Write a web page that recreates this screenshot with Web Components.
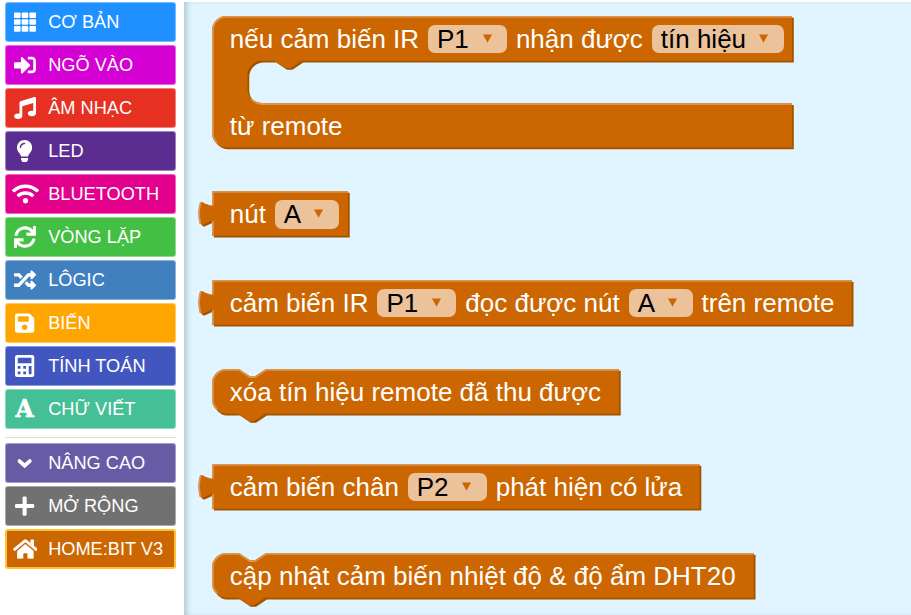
<!DOCTYPE html>
<html lang="vi">
<head>
<meta charset="utf-8">
<title>Home:Bit V3</title>
<style>
html, body { margin: 0; height: 100%; background: #fff; overflow: hidden; }
body { font-family: "Liberation Sans", Arial, sans-serif; }
</style>
</head>
<body>
<editor-app></editor-app>
<script>
const ICONS = {
  grid: [512, '<rect x="0" y="32" width="153" height="130" rx="22"/><rect x="179" y="32" width="153" height="130" rx="22"/><rect x="359" y="32" width="153" height="130" rx="22"/><rect x="0" y="191" width="153" height="130" rx="22"/><rect x="179" y="191" width="153" height="130" rx="22"/><rect x="359" y="191" width="153" height="130" rx="22"/><rect x="0" y="350" width="153" height="130" rx="22"/><rect x="179" y="350" width="153" height="130" rx="22"/><rect x="359" y="350" width="153" height="130" rx="22"/>'],
  input: [512, '<path d="M416 448h-84c-6.6 0-12-5.4-12-12v-40c0-6.6 5.4-12 12-12h84c17.7 0 32-14.3 32-32V160c0-17.7-14.3-32-32-32h-84c-6.6 0-12-5.4-12-12V76c0-6.6 5.4-12 12-12h84c53 0 96 43 96 96v192c0 53-43 96-96 96zm-47-201L201 79c-15-15-41-4.5-41 17v96H24c-13.3 0-24 10.7-24 24v96c0 13.3 10.7 24 24 24h136v96c0 21.5 26 32 41 17l168-168c9.3-9.4 9.3-24.6 0-34z"/>'],
  music: [512, '<path d="M511.99 32.01c0-21.71-21.1-37.01-41.6-30.51L150.4 96c-13.3 4.2-22.4 16.5-22.4 30.5v261.42c-10.05-2.38-20.72-3.92-32-3.92-53.02 0-96 28.65-96 64s42.98 64 96 64 96-28.65 96-64V214.31l256-75.02v184.63c-10.05-2.38-20.72-3.92-32-3.92-53.02 0-96 28.65-96 64s42.98 64 96 64 96-28.65 96-64l-.01-351.99z"/>'],
  bulb: [352, '<path d="M96.06 454.35c.01 6.29 1.87 12.45 5.36 17.69l17.09 25.69a31.99 31.99 0 0 0 26.64 14.28h61.71a31.99 31.99 0 0 0 26.64-14.28l17.09-25.69a31.989 31.989 0 0 0 5.36-17.69l.04-38.35H96.01l.05 38.35zM0 176c0 44.37 16.45 84.85 43.56 115.78 16.52 18.85 42.36 58.23 52.21 91.45.04.26.07.52.11.78h160.24c.04-.26.07-.51.11-.78 9.85-33.22 35.69-72.6 52.21-91.45C335.55 260.85 352 220.37 352 176 352 78.61 272.91-.3 175.45 0 73.44.31 0 82.97 0 176zm176-80c-44.11 0-80 35.89-80 80 0 8.84-7.16 16-16 16s-16-7.16-16-16c0-61.76 50.24-112 112-112 8.84 0 16 7.16 16 16s-7.16 16-16 16z"/>'],
  wifi: [640, '<path d="M634.91 154.88C457.74-8.99 182.19-8.93 5.09 154.88c-6.66 6.16-6.79 16.59-.35 22.98l34.24 33.97c6.14 6.1 16.02 6.23 22.4.38 145.92-133.68 371.3-133.71 517.25 0 6.38 5.85 16.26 5.71 22.4-.38l34.24-33.97c6.43-6.39 6.3-16.82-.36-22.98zM320 352c-35.35 0-64 28.65-64 64s28.65 64 64 64 64-28.65 64-64-28.65-64-64-64zm202.67-83.59c-115.26-101.93-290.21-101.82-405.34 0-6.9 6.1-7.12 16.69-.57 23.15l34.44 33.99c6 5.92 15.66 6.32 22.05.8 83.95-72.57 209.74-72.41 293.49 0 6.39 5.52 16.05 5.13 22.05-.8l34.44-33.99c6.56-6.46 6.33-17.06-.56-23.15z"/>'],
  loop: [512, '<path d="M440.65 12.57l4 82.77A247.16 247.16 0 0 0 255.83 8C134.73 8 33.91 94.92 12.29 209.82A12 12 0 0 0 24.09 224h49.05a12 12 0 0 0 11.67-9.26 175.91 175.91 0 0 1 317-56.94l-101.46-4.86a12 12 0 0 0-12.57 12v47.41a12 12 0 0 0 12 12H500a12 12 0 0 0 12-12V12a12 12 0 0 0-12-12h-47.37a12 12 0 0 0-11.98 12.57zM255.83 432a175.61 175.61 0 0 1-146-77.8l101.8 4.87a12 12 0 0 0 12.57-12v-47.4a12 12 0 0 0-12-12H12a12 12 0 0 0-12 12V500a12 12 0 0 0 12 12h47.35a12 12 0 0 0 12-12.6l-4.15-82.57A247.17 247.17 0 0 0 255.83 504c121.11 0 221.93-86.92 243.55-201.82a12 12 0 0 0-11.8-14.18h-49.05a12 12 0 0 0-11.67 9.26A175.86 175.86 0 0 1 255.83 432z"/>'],
  shuffle: [512, '<path d="M504.971 359.029c9.373 9.373 9.373 24.569 0 33.941l-80 79.984c-15.01 15.01-40.971 4.49-40.971-16.971V416h-58.785a12.004 12.004 0 0 1-8.773-3.812l-70.556-75.596 53.333-57.143L352 336h32v-39.981c0-21.438 25.943-31.998 40.971-16.971l80 79.981zM12 176h84l52.781 56.551 53.333-57.143-70.556-75.596A11.999 11.999 0 0 0 122.785 96H12c-6.627 0-12 5.373-12 12v56c0 6.627 5.373 12 12 12zm372 0v39.984c0 21.46 25.961 31.98 40.971 16.971l80-79.984c9.373-9.373 9.373-24.569 0-33.941l-80-79.981C409.943 24.021 384 34.582 384 56.019V96h-58.785a12.004 12.004 0 0 0-8.773 3.812L96 336H12c-6.627 0-12 5.373-12 12v56c0 6.627 5.373 12 12 12h110.785c3.326 0 6.503-1.381 8.773-3.812L352 176h32z"/>'],
  save: [448, '<path d="M433.941 129.941l-83.882-83.882A48 48 0 0 0 316.118 32H48C21.49 32 0 53.49 0 80v352c0 26.51 21.49 48 48 48h352c26.51 0 48-21.49 48-48V163.882a48 48 0 0 0-14.059-33.941zM224 416c-35.346 0-64-28.654-64-64 0-35.346 28.654-64 64-64s64 28.654 64 64c0 35.346-28.654 64-64 64zm96-304.52V212c0 6.627-5.373 12-12 12H76c-6.627 0-12-5.373-12-12V108c0-6.627 5.373-12 12-12h228.52c3.183 0 6.235 1.264 8.485 3.515l3.48 3.48A11.996 11.996 0 0 1 320 111.48z"/>'],
  calc: [448, '<path fill-rule="evenodd" d="M48 0H400Q448 0 448 48V464Q448 512 400 512H48Q0 512 0 464V48Q0 0 48 0ZM64 64V192H384V64ZM64 256V320H128V256ZM192 256V320H256V256ZM320 256V448H384V256ZM64 384V448H128V384ZM192 384V448H256V384Z"/>'],
  down: [448, '<path d="M104 212L224 318L344 212" fill="none" stroke="#fff" stroke-width="88" stroke-linecap="round"/>'],
  plus: [448, '<path d="M416 208H272V64c0-17.67-14.33-32-32-32h-32c-17.67 0-32 14.33-32 32v144H32c-17.67 0-32 14.33-32 32v32c0 17.67 14.33 32 32 32h144v144c0 17.67 14.33 32 32 32h32c17.67 0 32-14.33 32-32V304h144c17.67 0 32-14.33 32-32v-32c0-17.67-14.33-32-32-32z"/>'],
  home: [576, '<path d="M280.37 148.26L96 300.11V464a16 16 0 0 0 16 16l112.06-.29a16 16 0 0 0 15.92-16V368a16 16 0 0 1 16-16h64a16 16 0 0 1 16 16v95.64a16 16 0 0 0 16 16.05L464 480a16 16 0 0 0 16-16V300L295.67 148.26a12.19 12.19 0 0 0-15.3 0zM571.6 251.47L488 182.56V44.05a12 12 0 0 0-12-12h-56a12 12 0 0 0-12 12v72.61L318.47 43a48 48 0 0 0-61 0L4.34 251.47a12 12 0 0 0-1.6 16.9l25.5 31A12 12 0 0 0 45.15 301l235.22-193.74a12.19 12.19 0 0 1 15.3 0L530.9 301a12 12 0 0 0 16.9-1.6l25.5-31a12 12 0 0 0-1.7-16.93z"/>']
};

customElements.define('tool-category', class extends HTMLElement {
  connectedCallback() {
    const name = this.getAttribute('icon');
    const color = this.getAttribute('color');
    const edge = this.getAttribute('edge');
    const icon = ICONS[name];
    const glyph = icon
      ? `<svg width="${icon[0] * 22 / 512}" height="22" viewBox="0 0 ${icon[0]} 512" fill="#fff">${icon[1]}</svg>`
      : '<b>A</b>';
    this.attachShadow({ mode: 'open' }).innerHTML = `
      <style>
        :host { display: flex; align-items: center; box-sizing: border-box; height: 40px;
          border-radius: 3px; background: ${color};
          border: ${edge ? '2px solid ' + edge : '1px solid rgba(255,255,255,.4)'};
          padding-left: ${edge ? 4.5 : 5.5}px; color: #fff; font-size: 18.2px; line-height: 38px; white-space: nowrap; }
        i { display: flex; justify-content: center; width: 27px; flex: none; margin-right: 9.7px; }
        svg { display: block; }
        b { font: bold 25px/30px "DejaVu Serif", serif; -webkit-text-stroke: .6px #fff; transform: scaleX(.94); }
      </style><i>${glyph}</i><slot></slot>`;
  }
});

customElements.define('drop-field', class extends HTMLElement {
  connectedCallback() {
    this.attachShadow({ mode: 'open' }).innerHTML = `
      <style>
        :host { display: inline-flex; align-items: center; justify-content: space-between; box-sizing: border-box;
          height: 28.6px; width: ${this.getAttribute('w')}px; padding: 0 15.5px 0 9px; flex: none;
          border-radius: 7px; background: #ebc299; color: #000; }
        svg { display: block; margin-top: -1px; flex: none; }
      </style><slot></slot><svg width="9" height="9" viewBox="0 0 9 9"><path d="M0 .5H9L4.5 8.7Z" fill="#c60"/></svg>`;
  }
});

/* Outlines are in block units; one unit is 1.8px. */
const S = 1.8;
customElements.define('code-block', class extends HTMLElement {
  connectedCallback() {
    const kind = this.getAttribute('kind');
    const w = +this.getAttribute('w') / S - 1;
    const h = 24.9;
    let body, light, full = h;
    if (kind === 'value') {
      body = `M0 0H${w}V${h}H0V16.4L-4.8 18.6Q-6 19-6.6 18Q-8.2 12.3-6.7 6.8Q-6.2 5.7-5.2 6.3C-3 7.5-1.5 8-.2 8H0Z`;
      light = `M.5 .5H${w - .5}M.5 ${h - .5}V17.2M-6.5 17.9Q-7.9 12.3-6.4 7M.5 7.8V.5H1`;
    } else if (kind === 'command') {
      body = `M0 8A8 8 0 0 1 8 0H15l6 4h3l6-4H${w}V${h}H29.5l-6 4h-3l-6-4H8A8 8 0 0 1 0 ${h - 8}Z`;
      light = `M.5 7.5A7.5 7.5 0 0 1 8 .5H15l6 4h3l6-4H${w - .5}M2.7 ${h - 2.7}A7.5 7.5 0 0 1 .5 ${h - 8}V7.5`;
    } else {
      const x = 19.7, y = 48.4;
      full = 73;
      body = `M0 8A8 8 0 0 1 8 0H${w}V${h}H${x + 30}l-6 4h-3l-6-4h-7a8 8 0 0 0-8 8V${y - 8}a8 8 0 0 0 8 8H${w}V${full}H8A8 8 0 0 1 0 ${full - 8}Z`;
      light = `M.5 7.5A7.5 7.5 0 0 1 8 .5H${w - .5}M2.7 ${full - 2.7}A7.5 7.5 0 0 1 .5 ${full - 8}V7.5M${x + 2.3} ${y - 2.1}A8.5 8.5 0 0 0 ${x + 8} ${y + .5}H${w - .5}`;
    }
    this.attachShadow({ mode: 'open' }).innerHTML = `
      <style>
        :host { display: block; position: relative; width: ${w * S}px; height: ${full * S}px;
          color: #fff; font-size: 26px; white-space: nowrap; }
        .shape { position: absolute; left: 0; top: 0; overflow: visible; }
        .row { position: relative; display: flex; align-items: center; gap: 8.9px; height: 46px; padding-left: 17.6px; line-height: 46px; }
        .last { margin-top: 41px; }
      </style>
      <svg class="shape" width="${w * S}" height="${full * S}"><g transform="scale(${S})">
        <path d="${body}" fill="#a35200" transform="translate(1 1)"/>
        <path d="${body}" fill="#c60"/>
        <path d="${light}" fill="none" stroke="#db944d" stroke-linecap="round"/></g></svg>
      <div class="row"><slot></slot></div>
      ${kind === 'wrap' ? '<div class="row last"><slot name="tail"></slot></div>' : ''}`;
  }
});

customElements.define('editor-app', class extends HTMLElement {
  connectedCallback() {
    this.attachShadow({ mode: 'open' }).innerHTML = `
      <style>
        :host { display: flex; height: 615px; }
        nav { display: flex; flex-direction: column; gap: 3px; box-sizing: border-box; width: 184px; flex: none; padding: 2px 8px 0 5px; }
        hr { width: 100%; height: 1px; margin: 5px 0 2px; border: 0; background: #ddd; }
        main { flex: 1; min-width: 0; display: flex; flex-direction: column; margin-top: 2px; box-sizing: border-box;
          padding: 14.1px 0 0 28.2px; background: #e0f5ff; box-shadow: inset 5px 0 6px -3px rgba(60,85,100,.34); }
        code-block { flex: none; }
      </style>
      <nav>
        <tool-category icon="grid" color="#1e90ff">CƠ BẢN</tool-category>
        <tool-category icon="input" color="#d400d4">NGÕ VÀO</tool-category>
        <tool-category icon="music" color="#e63022">ÂM NHẠC</tool-category>
        <tool-category icon="bulb" color="#5c2d91">LED</tool-category>
        <tool-category icon="wifi" color="#e3008c">BLUETOOTH</tool-category>
        <tool-category icon="loop" color="#43bf43">VÒNG LẶP</tool-category>
        <tool-category icon="shuffle" color="#4180bf">LÔGIC</tool-category>
        <tool-category icon="save" color="#ffa500">BIẾN</tool-category>
        <tool-category icon="calc" color="#4256bf">TÍNH TOÁN</tool-category>
        <tool-category icon="letter" color="#45bf96">CHỮ VIẾT</tool-category>
        <hr>
        <tool-category icon="down" color="#685ba6">NÂNG CAO</tool-category>
        <tool-category icon="plus" color="#717171">MỞ RỘNG</tool-category>
        <tool-category icon="home" color="#cc6600" edge="#ffc233">HOME:BIT V3</tool-category>
      </nav>
      <main>
        <code-block kind="wrap" w="581.8"><span>nếu cảm biến IR</span><drop-field w="79">P1</drop-field><span>nhận được</span><drop-field w="132">tín hiệu</drop-field><span slot="tail">từ remote</span></code-block>
        <code-block kind="value" w="137.7" style="margin-top:44px"><span>nút</span><drop-field w="64">A</drop-field></code-block>
        <code-block kind="value" w="641.5" style="margin-top:43.9px"><span>cảm biến IR</span><drop-field w="79">P1</drop-field><span>đọc được nút</span><drop-field w="64">A</drop-field><span>trên remote</span></code-block>
        <code-block kind="command" w="408.7" style="margin-top:43.6px"><span>xóa tín hiệu remote đã thu được</span></code-block>
        <code-block kind="value" w="489.3" style="margin-top:50.4px"><span>cảm biến chân</span><drop-field w="79">P2</drop-field><span>phát hiện có lửa</span></code-block>
        <code-block kind="command" w="543.5" style="margin-top:44.2px"><span>cập nhật cảm biến nhiệt độ &amp; độ ẩm DHT20</span></code-block>
      </main>`;
  }
});
</script>
</body>
</html>
